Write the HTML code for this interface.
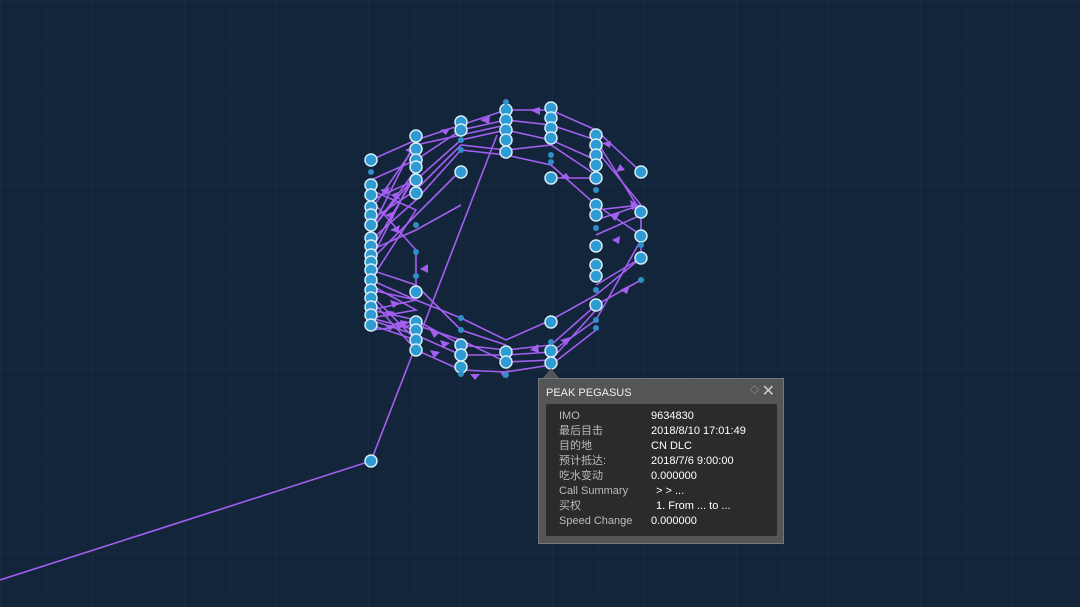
<!DOCTYPE html>
<html><head><meta charset="utf-8"><style>
body{margin:0;width:1080px;height:607px;overflow:hidden;background:#12253a;font-family:"Liberation Sans","Noto Sans CJK SC",sans-serif}
.bg{position:absolute;inset:0;background-image:linear-gradient(rgba(80,110,140,.07) 1px,transparent 1px),linear-gradient(90deg,rgba(80,110,140,.07) 1px,transparent 1px);background-size:46px 46px}
svg{position:absolute;left:0;top:0}
.tip{position:absolute;left:538px;top:378px;width:246px;height:166px;background:#545556;border:1px solid #777;box-sizing:border-box}
.tt{position:absolute;left:7px;top:8px;color:#eee;font-size:11px}
.x{position:absolute;right:8px;top:2px;color:#ccc;font-size:16px}
.d{position:absolute;right:24px;top:4px;color:#aaa;font-size:9px}
.in{position:absolute;left:7px;top:25px;width:231px;height:132px;background:#2a2b2c;border-radius:2px}
.r,.v{position:absolute;font-size:11px;line-height:15px;height:15px;white-space:nowrap}
.r{left:13px;color:#bbb}
.v{left:105px;color:#fff}
</style></head><body><div class="bg"></div>
<svg width="1080" height="607" viewBox="0 0 1080 607">
<g stroke="#a45ff0" stroke-width="1.6" fill="none">
<polyline points="0,580 371,461 416,345 497,135"/>
<polyline points="371,160 416,140 461,125 506,110 551,110 596,130 641,172"/>
<polyline points="371,180 416,160 461,130 506,120 551,125 596,140 641,212"/>
<polyline points="371,200 416,180 461,140 506,130 551,140 596,160"/>
<polyline points="371,220 416,190 461,145 506,150 551,145 596,175"/>
<polyline points="371,240 416,200 461,150 506,155 551,165 596,205 641,235"/>
<polyline points="371,260 416,215 461,170"/>
<polyline points="371,290 416,300 461,318 506,340 551,320 596,295 641,258"/>
<polyline points="371,310 416,320 461,345 506,350 551,345 596,305 641,280"/>
<polyline points="371,320 416,335 461,355 506,355 551,352 596,320 641,240"/>
<polyline points="371,300 416,350 461,370 506,372 551,365 596,330"/>
<polyline points="371,330 416,325 461,340 506,362 551,360 596,310"/>
<polyline points="371,270 416,285 461,330 506,345"/>
<polyline points="371,200 416,250 416,290"/>
<polyline points="551,178 596,178 596,150 641,205"/>
<polyline points="596,235 641,215 641,258 596,285"/>
<polyline points="371,250 416,230 461,205"/>
<polyline points="371,190 416,210 371,280 416,300 371,310"/>
<polyline points="416,140 371,230 416,170 371,260"/>
<polyline points="371,210 416,145 461,135 506,125"/>
<polyline points="371,285 416,310 371,318 416,330"/>
<polyline points="371,230 416,175 371,250"/>
<polyline points="371,295 416,340 371,325"/>
<polyline points="596,210 641,205 596,220"/>
</g>
<g fill="#a45ff0">
<path d="M390 230l10-5-2 8z"/><path d="M400 320l10 2-8 5z"/><path d="M500 372l10-2-6 8z"/><path d="M470 374l10 0-5 6z"/><path d="M440 340l10 3-7 5z"/><path d="M530 350l8-6 1 9z"/><path d="M620 290l10-5-3 9z"/><path d="M610 215l10-2-5 8z"/><path d="M570 178l-10 0 6-5z"/><path d="M530 110l10-3 0 8z"/><path d="M480 120l10-4-1 8z"/><path d="M440 130l10-2-4 7z"/><path d="M405 150l10-4-2 8z"/><path d="M600 140l-8-5 9-2z"/><path d="M625 170l-9 2 4-8z"/><path d="M390 300l10 3-7 5z"/><path d="M400 200l-10-5 8-3z"/><path d="M420 269l8-5 0 9z"/><path d="M404 321l-5 10 -4-8z"/><path d="M630 200l10 6-8 4z"/><path d="M560 340l10-3-3 8z"/>
<path d="M380 190l10-3-3 8z"/><path d="M385 215l10-4-2 8z"/><path d="M385 310l10 2-7 5z"/><path d="M385 325l10 0-5 6z"/><path d="M430 330l10 2-6 6z"/><path d="M430 350l10 2-6 6z"/><path d="M610 148l-8-5 9-2z"/><path d="M612 240l8-4 -1 8z"/>
</g>
<g fill="#2f9bd3" stroke="#d8ecf6" stroke-width="1.5">
<circle cx="371" cy="160" r="6"/>
<circle cx="371" cy="185" r="6"/><circle cx="371" cy="195" r="6"/><circle cx="371" cy="207" r="6"/><circle cx="371" cy="215" r="6"/><circle cx="371" cy="225" r="6"/><circle cx="371" cy="238" r="6"/><circle cx="371" cy="246" r="6"/><circle cx="371" cy="255" r="6"/><circle cx="371" cy="262" r="6"/><circle cx="371" cy="270" r="6"/><circle cx="371" cy="280" r="6"/><circle cx="371" cy="290" r="6"/><circle cx="371" cy="298" r="6"/><circle cx="371" cy="307" r="6"/><circle cx="371" cy="315" r="6"/><circle cx="371" cy="325" r="6"/>
<circle cx="416" cy="136" r="6"/><circle cx="416" cy="149" r="6"/><circle cx="416" cy="160" r="6"/><circle cx="416" cy="167" r="6"/><circle cx="416" cy="180" r="6"/><circle cx="416" cy="193" r="6"/><circle cx="416" cy="292" r="6"/><circle cx="416" cy="322" r="6"/><circle cx="416" cy="330" r="6"/><circle cx="416" cy="340" r="6"/><circle cx="416" cy="350" r="6"/>
<circle cx="461" cy="122" r="6"/><circle cx="461" cy="130" r="6"/><circle cx="461" cy="172" r="6"/><circle cx="461" cy="345" r="6"/><circle cx="461" cy="355" r="6"/><circle cx="461" cy="367" r="6"/>
<circle cx="506" cy="110" r="6"/><circle cx="506" cy="120" r="6"/><circle cx="506" cy="130" r="6"/><circle cx="506" cy="140" r="6"/><circle cx="506" cy="152" r="6"/><circle cx="506" cy="352" r="6"/><circle cx="506" cy="362" r="6"/>
<circle cx="551" cy="108" r="6"/><circle cx="551" cy="118" r="6"/><circle cx="551" cy="128" r="6"/><circle cx="551" cy="138" r="6"/><circle cx="551" cy="178" r="6"/><circle cx="551" cy="322" r="6"/><circle cx="551" cy="351" r="6"/><circle cx="551" cy="363" r="6"/>
<circle cx="596" cy="135" r="6"/><circle cx="596" cy="145" r="6"/><circle cx="596" cy="155" r="6"/><circle cx="596" cy="165" r="6"/><circle cx="596" cy="178" r="6"/><circle cx="596" cy="205" r="6"/><circle cx="596" cy="215" r="6"/><circle cx="596" cy="246" r="6"/><circle cx="596" cy="265" r="6"/><circle cx="596" cy="276" r="6"/><circle cx="596" cy="305" r="6"/>
<circle cx="641" cy="172" r="6"/><circle cx="641" cy="212" r="6"/><circle cx="641" cy="236" r="6"/><circle cx="641" cy="258" r="6"/>
<circle cx="371" cy="461" r="6"/>
</g>
<g fill="#2f8fc6">
<circle cx="371" cy="172" r="3"/><circle cx="416" cy="225" r="3"/><circle cx="416" cy="252" r="3"/><circle cx="416" cy="276" r="3"/><circle cx="461" cy="140" r="3"/><circle cx="461" cy="150" r="3"/><circle cx="461" cy="318" r="3"/><circle cx="461" cy="330" r="3"/><circle cx="461" cy="374" r="3"/><circle cx="506" cy="375" r="3"/><circle cx="506" cy="102" r="3"/><circle cx="551" cy="155" r="3"/><circle cx="551" cy="162" r="3"/><circle cx="551" cy="342" r="3"/><circle cx="596" cy="190" r="3"/><circle cx="596" cy="228" r="3"/><circle cx="596" cy="290" r="3"/><circle cx="596" cy="320" r="3"/><circle cx="596" cy="328" r="3"/><circle cx="641" cy="280" r="3"/><circle cx="641" cy="245" r="3"/>
</g>
<path d="M543 378l8-10 8 10z" fill="#545556"/>
</svg>
<div class="tip"><div class="tt">PEAK PEGASUS</div><div class="d">◇</div><div class="x">✕</div>
<div class="in">
<div class="r" style="top:5px">IMO</div><div class="v" style="top:5px">9634830</div>
<div class="r" style="top:20px">最后目击</div><div class="v" style="top:20px">2018/8/10 17:01:49</div>
<div class="r" style="top:35px">目的地</div><div class="v" style="top:35px">CN DLC</div>
<div class="r" style="top:50px">预计抵达:</div><div class="v" style="top:50px">2018/7/6 9:00:00</div>
<div class="r" style="top:65px">吃水变动</div><div class="v" style="top:65px">0.000000</div>
<div class="r" style="top:80px">Call Summary</div><div class="v" style="top:80px;left:110px">&gt; &gt; ...</div>
<div class="r" style="top:95px">买权</div><div class="v" style="top:95px;left:110px">1. From ... to ...</div>
<div class="r" style="top:110px">Speed Change</div><div class="v" style="top:110px">0.000000</div>
</div></div>
</body></html>
